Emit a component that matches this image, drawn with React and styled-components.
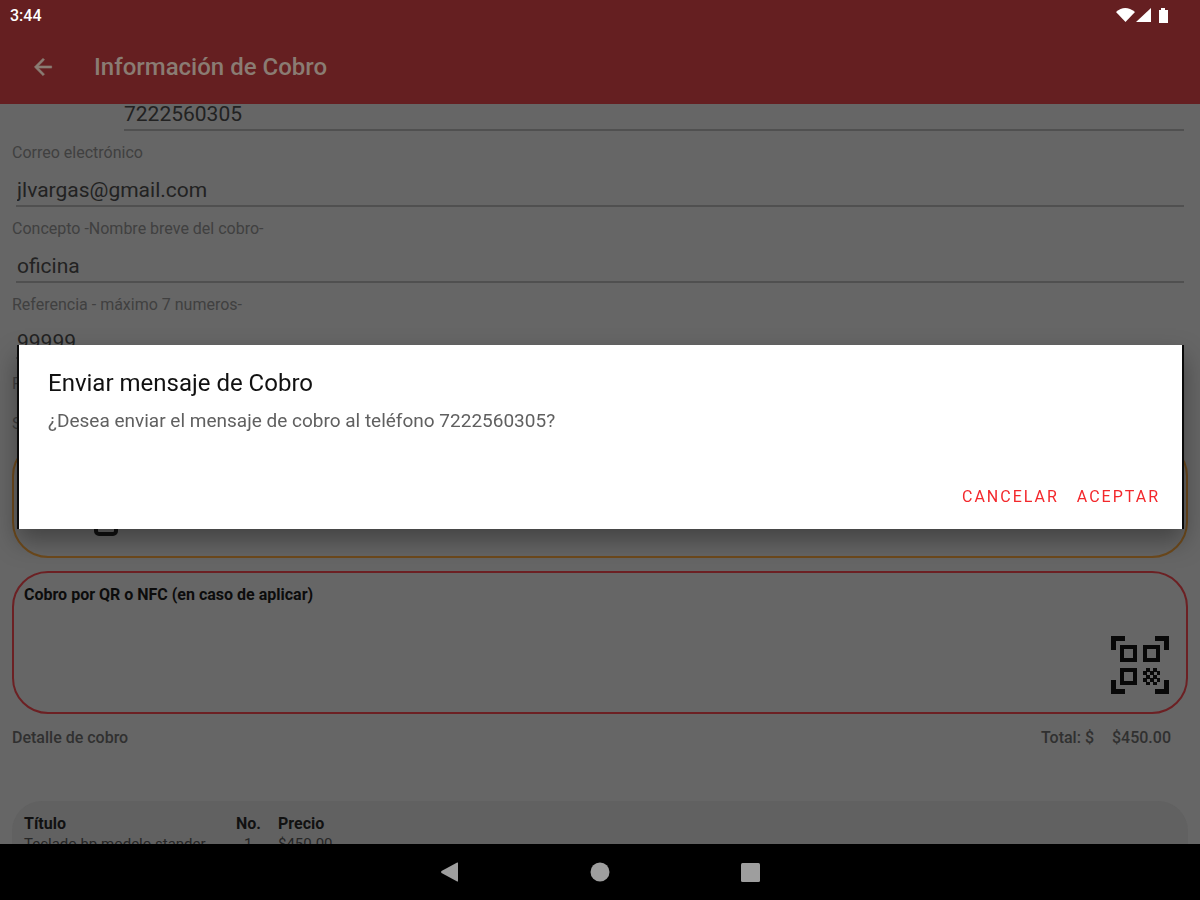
import styled, { createGlobalStyle } from 'styled-components';

const GlobalStyle = createGlobalStyle`
  * {
    box-sizing: border-box;
  }
  body {
    margin: 0;
    background: #666;
    font-family: Roboto, 'Liberation Sans', sans-serif;
  }
`;

const Screen = styled.div`
  height: 100vh;
  display: flex;
  flex-direction: column;
  overflow: hidden;
`;

const StatusBar = styled.div`
  display: flex;
  align-items: center;
  justify-content: space-between;
  height: 30px;
  padding: 0 30px 0 10px;
  background: #651f21;
  color: #fff;
  font-size: 16px;
  font-weight: 500;
`;

const StatusIcons = styled.svg`
  width: 54px;
  height: 18px;
  fill: #fff;
`;

const AppBar = styled.header`
  display: flex;
  align-items: center;
  gap: 38px;
  height: 74px;
  padding: 0 30px;
  background: #651f21;
  color: #8a7c73;
`;

const BackButton = styled.button`
  display: flex;
  padding: 0;
  border: 0;
  background: none;
  color: inherit;
  svg {
    width: 26px;
    height: 26px;
    fill: currentColor;
    stroke: currentColor;
    stroke-width: 0.5;
  }
`;

const AppTitle = styled.h1`
  margin: 0;
  font-size: 24px;
  font-weight: 500;
`;

const Content = styled.main`
  flex: 1;
  min-height: 0;
  overflow: hidden;
  padding: 0 12px;
`;

const Form = styled.form`
  display: flex;
  flex-direction: column;
  margin-top: -21px;
`;

const Label = styled.label`
  display: block;
  line-height: 24px;
  font-size: 16px;
  color: #404040;
`;

const Input = styled.input`
  display: block;
  width: 100%;
  height: ${(props) => (props.$tall ? 48 : 42)}px;
  padding: ${(props) => (props.$tall ? '16px 0 0' : '10px 0 0 1px')};
  border: 0;
  border-bottom: 2px solid #505050;
  background: none;
  font-family: inherit;
  font-size: 21px;
  color: #222;
  outline: none;
`;

const PhoneRow = styled.div`
  display: grid;
  grid-template-columns: 112px 1fr;
  height: 48px;
  padding-right: 4px;
  ${Label} {
    padding-top: 4px;
  }
`;

const Field = styled.div`
  padding: 10px 4px 0;
  ${Label} {
    margin: 0 -4px;
  }
`;

const SendLabels = styled.div`
  display: flex;
  flex-direction: column;
  gap: 16px;
  padding-top: 13px;
`;

const Card = styled.section`
  display: flex;
  justify-content: space-between;
  align-items: flex-end;
  height: ${(props) => (props.$short ? 118 : 143)}px;
  margin: ${(props) => (props.$short ? '4px 0 0' : '13px 0 0')};
  padding: ${(props) => (props.$short ? '0 80px 20px' : '0 17px 18px 10px')};
  border: 2px solid ${(props) => props.$color};
  border-radius: 36px;
`;

const CardTitle = styled.h2`
  align-self: flex-start;
  margin: 0;
  padding-top: 10px;
  line-height: 24px;
  font-size: 16px;
  font-weight: 700;
  color: #0c0c0c;
`;

const QrIcon = styled.svg`
  width: 58px;
  height: 58px;
  fill: #080808;
`;

const PhoneIcon = styled.svg`
  width: 24px;
  height: 40px;
  fill: none;
  stroke: #111;
  stroke-width: 4;
`;

const Summary = styled.div`
  display: flex;
  gap: 18px;
  padding: 12px 17px 0 0;
  line-height: 24px;
  font-size: 16px;
  font-weight: 500;
  color: #303030;
`;

const SummaryTitle = styled.span`
  flex: 1;
`;

const Detail = styled.section`
  height: 90px;
  margin-top: 51px;
  padding: 13px 12px;
  border-radius: 30px;
  background: #616161;
`;

const Table = styled.table`
  border-collapse: collapse;
  text-align: left;
  line-height: 20px;
  th,
  td {
    padding: 0;
  }
  th {
    font-size: 16px;
    font-weight: 700;
    color: #111;
  }
  td {
    font-size: 15px;
    color: #262626;
  }
  th:first-child {
    width: 212px;
  }
  th:nth-child(2) {
    width: 42px;
  }
  td:nth-child(2) {
    padding-left: 8px;
  }
`;

const NavBar = styled.nav`
  display: flex;
  justify-content: center;
  align-items: center;
  gap: 126px;
  height: 56px;
  background: #000;
`;

const NavButton = styled.button`
  display: flex;
  padding: 0;
  border: 0;
  background: none;
  svg {
    width: 24px;
    height: 24px;
    fill: #9e9e9e;
  }
`;

const Overlay = styled.div`
  position: fixed;
  inset: 30px 0 56px;
  display: flex;
  align-items: center;
  padding: 0 16px 0 17px;
`;

const Dialog = styled.div`
  flex: 1;
  padding: 24px 22px 16px 29px;
  border: solid #0a0a0a;
  border-width: 0 2px;
  background: #fff;
  background-clip: padding-box;
  box-shadow: 0 12px 24px rgba(0, 0, 0, 0.35);
`;

const DialogTitle = styled.h2`
  margin: 0;
  line-height: 28px;
  font-size: 24px;
  font-weight: 400;
  color: #111;
`;

const DialogText = styled.p`
  margin: 12px 0 48px;
  line-height: 24px;
  font-size: 19px;
  color: #606060;
`;

const DialogActions = styled.div`
  display: flex;
  justify-content: flex-end;
  gap: 18px;
`;

const TextButton = styled.button`
  padding: 0;
  border: 0;
  background: none;
  line-height: 32px;
  font-family: inherit;
  font-size: 16px;
  font-weight: 400;
  letter-spacing: 2px;
  text-transform: uppercase;
  color: #f3282c;
`;

const fields = [
  { id: 'correo', label: 'Correo electrónico', value: 'jlvargas@gmail.com' },
  { id: 'concepto', label: 'Concepto -Nombre breve del cobro-', value: 'oficina' },
  { id: 'referencia', label: 'Referencia - máximo 7 numeros-', value: '99999' },
];

export default function App() {
  return (
    <>
      <GlobalStyle />
      <Screen>
        <StatusBar>
          <span>3:44</span>
          <StatusIcons viewBox="0 0 54 18">
            <path d="M0 6Q9 -2 19 6L9.500 16Z" />
            <path d="M35 2V16H20Z" />
            <path d="M43 4h2V2h4v2h3v13h-9Z" />
          </StatusIcons>
        </StatusBar>
        <AppBar>
          <BackButton aria-label="Atrás">
            <svg viewBox="0 0 24 24">
              <path d="M20 11H7.830l5.590-5.590L12 4l-8 8 8 8 1.410-1.410L7.830 13H20z" />
            </svg>
          </BackButton>
          <AppTitle>Información de Cobro</AppTitle>
        </AppBar>
        <Content>
          <Form>
            <PhoneRow>
              <Label htmlFor="telefono">Número celular</Label>
              <Input id="telefono" $tall defaultValue="7222560305" />
            </PhoneRow>
            {fields.map((field) => (
              <Field key={field.id}>
                <Label htmlFor={field.id}>{field.label}</Label>
                <Input id={field.id} defaultValue={field.value} />
              </Field>
            ))}
          </Form>
          <SendLabels>
            <Label as="span">Fecha</Label>
            <Label as="span">Seleccione</Label>
          </SendLabels>
          <Card $short $color="#6e4a1c">
            <PhoneIcon viewBox="0 0 24 40">
              <rect x="2" y="2" width="20" height="36" rx="3" />
            </PhoneIcon>
          </Card>
          <Card $color="#6c2023">
            <CardTitle>Cobro por QR o NFC (en caso de aplicar)</CardTitle>
            <QrIcon viewBox="0 0 58 58">
              <path d="M0 0h14v5H5v9H0zM44 0h14v14h-5V5h-9zM0 44h5v9h9v5H0zM53 44h5v14H44v-5h9z" />
              <path
                fillRule="evenodd"
                d="M9 9h17v17H9zm4 4v9h9v-9zM32 9h17v17H32zm4 4v9h9v-9zM9 32h17v17H9zm4 4v9h9v-9z"
              />
              <path d="M35 32h4v4h-4zM42 32h4v4h-4zM32 35h4v4h-4zM39 35h4v4h-4zM46 35h3v4h-3zM35 39h4v4h-4zM42 39h4v4h-4zM32 42h4v4h-4zM39 42h4v4h-4zM46 42h3v4h-3zM35 46h4v3h-4zM42 46h4v3h-4z" />
            </QrIcon>
          </Card>
          <Summary>
            <SummaryTitle>Detalle de cobro</SummaryTitle>
            <span>Total: $</span>
            <span>$450.00</span>
          </Summary>
          <Detail>
            <Table>
              <thead>
                <tr>
                  <th>Título</th>
                  <th>No.</th>
                  <th>Precio</th>
                </tr>
              </thead>
              <tbody>
                <tr>
                  <td>Teclado hp modelo stander</td>
                  <td>1</td>
                  <td>$450.00</td>
                </tr>
              </tbody>
            </Table>
          </Detail>
        </Content>
        <NavBar>
          <NavButton aria-label="Atrás">
            <svg viewBox="0 0 24 24">
              <path d="M20 3v18q0 .8-.8.4L3.500 13q-1-1 0-2L19.200 2.600Q20 2.200 20 3z" />
            </svg>
          </NavButton>
          <NavButton aria-label="Inicio">
            <svg viewBox="0 0 24 24">
              <circle cx="12" cy="12" r="9.500" />
            </svg>
          </NavButton>
          <NavButton aria-label="Recientes">
            <svg viewBox="0 0 24 24">
              <rect x="3" y="3" width="19" height="19" rx="1.500" />
            </svg>
          </NavButton>
        </NavBar>
      </Screen>
      <Overlay>
        <Dialog role="dialog" aria-labelledby="dialog-title">
          <DialogTitle id="dialog-title">Enviar mensaje de Cobro</DialogTitle>
          <DialogText>¿Desea enviar el mensaje de cobro al teléfono 7222560305?</DialogText>
          <DialogActions>
            <TextButton>Cancelar</TextButton>
            <TextButton>Aceptar</TextButton>
          </DialogActions>
        </Dialog>
      </Overlay>
    </>
  );
}
